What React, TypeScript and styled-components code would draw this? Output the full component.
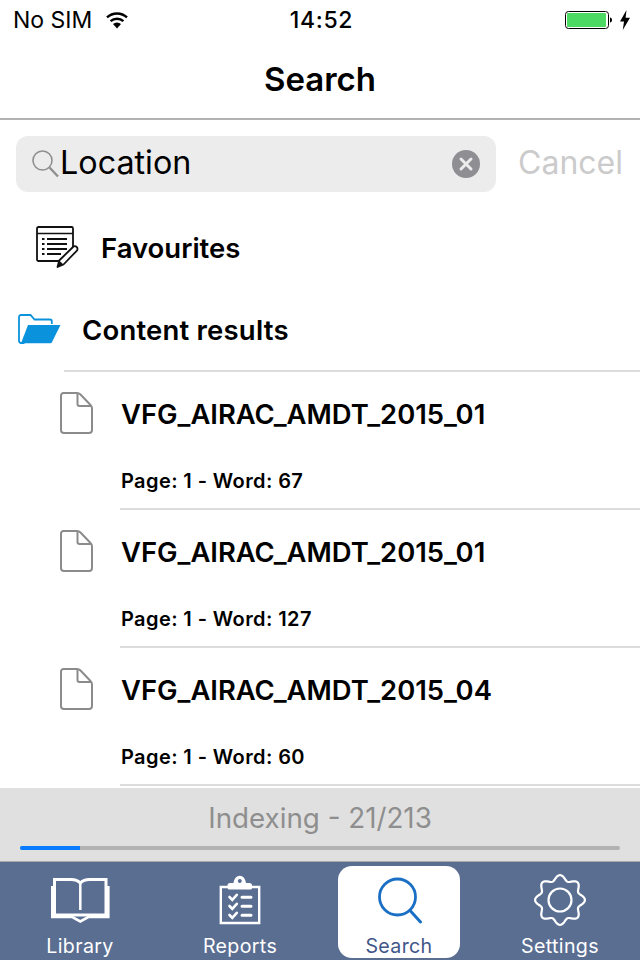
import * as React from "react";
import styled, { createGlobalStyle } from "styled-components";

const Global = createGlobalStyle`
  html, body {
    margin: 0;
    padding: 0;
    background: #fff;
  }
  * {
    box-sizing: border-box;
  }
`;

const Page = styled.div`
  width: 640px;
  height: 960px;
  display: flex;
  flex-direction: column;
  overflow: hidden;
  background: #fff;
  color: #000;
  font-family: Inter, "Liberation Sans", sans-serif;
`;
const StatusBar = styled.div`
  height: 40px;
  padding: 0 10px 0 13px;
  display: grid;
  grid-template-columns: 1fr auto 1fr;
  align-items: center;
  font-size: 23px;
`;
const StatusLeft = styled.div`
  display: flex;
  align-items: center;
  gap: 13px;
`;
const StatusRight = styled.div`
  display: flex;
  justify-content: flex-end;
  align-items: center;
  gap: 8px;
`;
const Clock = styled.div`
  font-weight: 500;
  letter-spacing: 0.7px;
`;
const NavBar = styled.div`
  height: 80px;
  display: flex;
  align-items: center;
  justify-content: center;
  font-size: 33px;
  font-weight: 600;
  border-bottom: 2px solid #b2b2b2;
`;
const SearchRow = styled.div`
  height: 72px;
  padding: 16px 17px 0 16px;
  display: flex;
  justify-content: space-between;
`;
const SearchField = styled.div`
  width: 480px;
  height: 56px;
  padding: 0 16px 0 15px;
  display: flex;
  align-items: center;
  border-radius: 12px;
  background: #ececec;
`;
const SearchText = styled.div`
  flex: 1;
  font-size: 32.3px;
  padding-bottom: 4px;
`;
const Cancel = styled.div`
  font-size: 32px;
  line-height: 54px;
  color: #cbcbcb;
`;
const Favourites = styled.div`
  height: 112px;
  padding-left: 36px;
  display: flex;
  align-items: center;
  gap: 22px;
  font-size: 27.5px;
  font-weight: 600;
`;
const SectionHead = styled.div`
  height: 52px;
  padding-left: 18px;
  display: flex;
  align-items: center;
  gap: 21px;
  font-size: 27.5px;
  font-weight: 600;
  letter-spacing: 0.2px;
`;
const FolderSvg = styled.svg`
  margin-top: -3px;
`;
const SectionLine = styled.div`
  height: 2px;
  margin: 14px 0 0 64px;
  background: #dcdcdc;
`;
const List = styled.div`
  flex: 1;
  min-height: 0;
  overflow: hidden;
`;
const Result = styled.div`
  height: 138px;
  padding-left: 60px;
  display: flex;
  gap: 26px;
`;
const FileIcon = styled.svg`
  flex: none;
  margin-top: 20px;
`;
const ResultBody = styled.div`
  flex: 1;
  padding-left: 1px;
  display: flex;
  flex-direction: column;
  border-bottom: 2px solid #dcdcdc;
`;
const ResultTitle = styled.div`
  margin-top: 24px;
  font-size: 27.4px;
  line-height: 36px;
  font-weight: 600;
`;
const ResultMeta = styled.div`
  margin-top: 37px;
  font-size: 20px;
  line-height: 24px;
  font-weight: 600;
  letter-spacing: 0.4px;
`;
const IndexBar = styled.div`
  height: 74px;
  padding: 12px 20px 0;
  background: #e0e0e0;
  border-bottom: 1px solid #aaa;
`;
const IndexText = styled.div`
  text-align: center;
  font-size: 27.75px;
  line-height: 36px;
  color: #8e8e8e;
`;
const Track = styled.div`
  height: 4px;
  margin-top: 10px;
  border-radius: 2px;
  background: #b2b2b2;
  overflow: hidden;
`;
const Fill = styled.div`
  height: 100%;
  background: #0a7aff;
`;
const TabBar = styled.div`
  height: 98px;
  padding: 4px 0 2px;
  display: grid;
  grid-template-columns: repeat(4, 1fr);
  background: #5a6e92;
`;
const Tab = styled.div<{ $active?: boolean }>`
  width: 122px;
  justify-self: center;
  display: flex;
  flex-direction: column;
  align-items: center;
  border-radius: 14px;
  margin-right: ${(p) => (p.$active ? "2px" : "0")};
  background: ${(p) => (p.$active ? "#fff" : "transparent")};
  color: ${(p) => (p.$active ? "#3f5688" : "#fff")};
`;
const TabIcon = styled.div`
  height: 67px;
  display: flex;
  align-items: center;
  justify-content: center;
`;
const TabLabel = styled.div`
  margin-top: 1px;
  font-size: 19.6px;
  line-height: 24px;
  letter-spacing: 0.35px;
`;

const Wifi = () => (
  <svg width="24" height="18" viewBox="0 0 24 18">
    <path d="M12 17.500 8 13a5.800 5.800 0 0 1 8 0z" fill="#000" />
    <path d="M5.600 10.200a9.400 9.400 0 0 1 12.800 0" fill="none" stroke="#000" strokeWidth="2.400" />
    <path d="M2 6.400a14.600 14.600 0 0 1 20 0" fill="none" stroke="#000" strokeWidth="2.400" />
  </svg>
);

const Battery = () => (
  <svg width="47" height="20" viewBox="0 0 47 20">
    <rect x="0.500" y="1.500" width="43" height="17" rx="3" fill="#fff" stroke="#000" />
    <rect x="2" y="3" width="39" height="14" rx="1" fill="#4cd964" />
    <path d="M45 7.500c1.200.2 2 1.200 2 2.500s-.8 2.300-2 2.500z" fill="#000" />
  </svg>
);

const Bolt = () => (
  <svg width="10" height="20" viewBox="0 0 10 20">
    <path d="M6.500 0 0 11.500h4L2.800 20 10 7.800H5.600z" fill="#000" />
  </svg>
);

const Magnifier = () => (
  <svg width="29" height="30" viewBox="0 0 29 30">
    <circle cx="11.500" cy="11.500" r="9.500" fill="none" stroke="#8f8f8f" strokeWidth="1.600" />
    <path d="m18.500 18.500 8.500 9" fill="none" stroke="#8f8f8f" strokeWidth="2.400" />
  </svg>
);

const ClearIcon = () => (
  <svg width="28" height="28" viewBox="0 0 28 28">
    <circle cx="14" cy="14" r="14" fill="#8e8e93" />
    <path d="m9 9 10 10M19 9 9 19" stroke="#ececec" strokeWidth="3" strokeLinecap="round" />
  </svg>
);

const FavouritesIcon = () => (
  <svg width="43" height="44" viewBox="0 0 43 44">
    <path
      d="M27 35H2.500A1.500 1.500 0 0 1 1 33.500V2.500A1.500 1.500 0 0 1 2.500 1h33A1.500 1.500 0 0 1 37 2.500V25"
      fill="none"
      stroke="#111"
      strokeWidth="1.800"
    />
    <path d="M1 7.500h36" stroke="#111" strokeWidth="1.600" />
    <path
      d="M6 13h2.500M11 13h20M6 18h2.500M11 18h20M6 23h2.500M11 23h20M6 28h2.500M11 28h14"
      stroke="#111"
      strokeWidth="1.800"
    />
    <path
      d="m21.500 41 1.700-6.500L37 21c1-1 2.600-1 3.700 0s1 2.800 0 3.800L27.500 38.500z"
      fill="#fff"
      stroke="#111"
      strokeWidth="1.800"
      strokeLinejoin="round"
    />
    <path d="m21.500 41 1.700-6.500 4.300 4z" fill="#111" />
  </svg>
);

const FolderIcon = () => (
  <FolderSvg width="43" height="30" viewBox="0 0 43 30">
    <path
      d="M6.500 29H3a2 2 0 0 1-2-2V3a2 2 0 0 1 2-2h9.500l4 4.500H32a1.800 1.800 0 0 1 1.800 1.800V10"
      fill="none"
      stroke="#0a93dc"
      strokeWidth="1.800"
    />
    <path d="M10 11h32.500l-8.700 17.500a1.500 1.500 0 0 1-1.300.8H3z" fill="#0a93dc" />
  </FolderSvg>
);

const DocIcon = () => (
  <FileIcon width="34" height="42" viewBox="0 0 34 42">
    <path
      d="M3.500 1H17c1.500 0 2.500.5 3.500 1.500l10 10.500c1 1 1.500 2 1.500 3.500V38a3 3 0 0 1-3 3H4a3 3 0 0 1-3-3V3.500A2.500 2.500 0 0 1 3.500 1z"
      fill="none"
      stroke="#8b8b8b"
      strokeWidth="2"
    />
    <path d="M17.500 1.500V12a2 2 0 0 0 2 2H32" fill="none" stroke="#8b8b8b" strokeWidth="2" />
  </FileIcon>
);

const BookIcon = () => (
  <svg width="60" height="48" viewBox="0 0 60 48">
    <path
      d="M4.500 3.500H21c4 0 7 1 9.300 3.500 2.300-2.500 5.300-3.500 9.300-3.500H56V39H4.500z"
      fill="none"
      stroke="#fff"
      strokeWidth="3"
    />
    <path d="M30.300 7v27" stroke="#fff" strokeWidth="2.500" />
    <path d="M2.300 10v31h20l8 4.500 8-4.500h20V10" fill="none" stroke="#fff" strokeWidth="2.600" />
  </svg>
);

const ClipboardIcon = () => (
  <svg width="42" height="52" viewBox="0 0 42 52">
    <path d="M10 13H1.800v36h38.400V13H32" fill="none" stroke="#fff" strokeWidth="2.400" />
    <path
      d="M10.500 15.500h21a1.500 1.500 0 0 0 1.500-1.500v-2.500a2.500 2.500 0 0 0-2.500-2.500H27C26.500 5 24 1.800 20.800 1.800S15 5 14.500 9h-3.500A2.500 2.500 0 0 0 8.500 11.500V14a2 2 0 0 0 2 1.500z"
      fill="#fff"
    />
    <circle cx="20.800" cy="7" r="2" fill="#5a6e92" />
    <path
      d="m10.500 23 2.800 2.800 4.500-5M10.500 32l2.800 2.800 4.500-5M10.500 41l2.800 2.800 4.500-5"
      fill="none"
      stroke="#fff"
      strokeWidth="2.600"
      strokeLinecap="round"
    />
    <path d="M23 23.300h9M23 32.300h9M23 41.300h9" stroke="#fff" strokeWidth="3" strokeLinecap="round" />
  </svg>
);

const SearchTabIcon = () => (
  <svg width="46" height="48" viewBox="-1.500 0 46 48">
    <circle cx="20" cy="21" r="18" fill="none" stroke="#1a6fc4" strokeWidth="2.800" />
    <path d="m33 35 10 11" stroke="#1a6fc4" strokeWidth="3" strokeLinecap="round" />
  </svg>
);

const gearPath = (() => {
  const steps = 160;
  const pts: string[] = [];
  for (let i = 0; i < steps; i++) {
    const t = (i / steps) * Math.PI * 2;
    // eight soft teeth, one of them pointing straight up
    const r = 22.3 + 2.6 * Math.cos(8 * t);
    const x = 26 + r * Math.sin(t);
    const y = 26 - r * Math.cos(t);
    pts.push(`${i === 0 ? "M" : "L"}${x.toFixed(2)} ${y.toFixed(2)}`);
  }
  return pts.join(" ") + "Z";
})();

const GearIcon = () => (
  <svg width="52" height="52" viewBox="0 0 52 52">
    <path d={gearPath} fill="none" stroke="#fff" strokeWidth="2.200" strokeLinejoin="round" />
    <circle cx="26" cy="26" r="11.500" fill="none" stroke="#fff" strokeWidth="2.200" />
  </svg>
);

const results = [
  { title: "VFG_AIRAC_AMDT_2015_01", meta: "Page: 1 - Word: 67" },
  { title: "VFG_AIRAC_AMDT_2015_01", meta: "Page: 1 - Word: 127" },
  { title: "VFG_AIRAC_AMDT_2015_04", meta: "Page: 1 - Word: 60" },
];

const tabs = [
  { label: "Library", icon: <BookIcon /> },
  { label: "Reports", icon: <ClipboardIcon /> },
  { label: "Search", icon: <SearchTabIcon />, active: true },
  { label: "Settings", icon: <GearIcon /> },
];

export default function App(): JSX.Element {
  return (
    <Page>
      <Global />
      <StatusBar>
        <StatusLeft>
          No SIM
          <Wifi />
        </StatusLeft>
        <Clock>14:52</Clock>
        <StatusRight>
          <Battery />
          <Bolt />
        </StatusRight>
      </StatusBar>
      <NavBar>Search</NavBar>
      <SearchRow>
        <SearchField>
          <Magnifier />
          <SearchText>Location</SearchText>
          <ClearIcon />
        </SearchField>
        <Cancel>Cancel</Cancel>
      </SearchRow>
      <Favourites>
        <FavouritesIcon />
        Favourites
      </Favourites>
      <SectionHead>
        <FolderIcon />
        Content results
      </SectionHead>
      <SectionLine />
      <List>
        {results.map((r, i) => (
          <Result key={i}>
            <DocIcon />
            <ResultBody>
              <ResultTitle>{r.title}</ResultTitle>
              <ResultMeta>{r.meta}</ResultMeta>
            </ResultBody>
          </Result>
        ))}
      </List>
      <IndexBar>
        <IndexText>Indexing - 21/213</IndexText>
        <Track>
          <Fill style={{ width: `${(60 / 600) * 100}%` }} />
        </Track>
      </IndexBar>
      <TabBar>
        {tabs.map((t) => (
          <Tab key={t.label} $active={t.active}>
            <TabIcon>{t.icon}</TabIcon>
            <TabLabel>{t.label}</TabLabel>
          </Tab>
        ))}
      </TabBar>
    </Page>
  );
}
